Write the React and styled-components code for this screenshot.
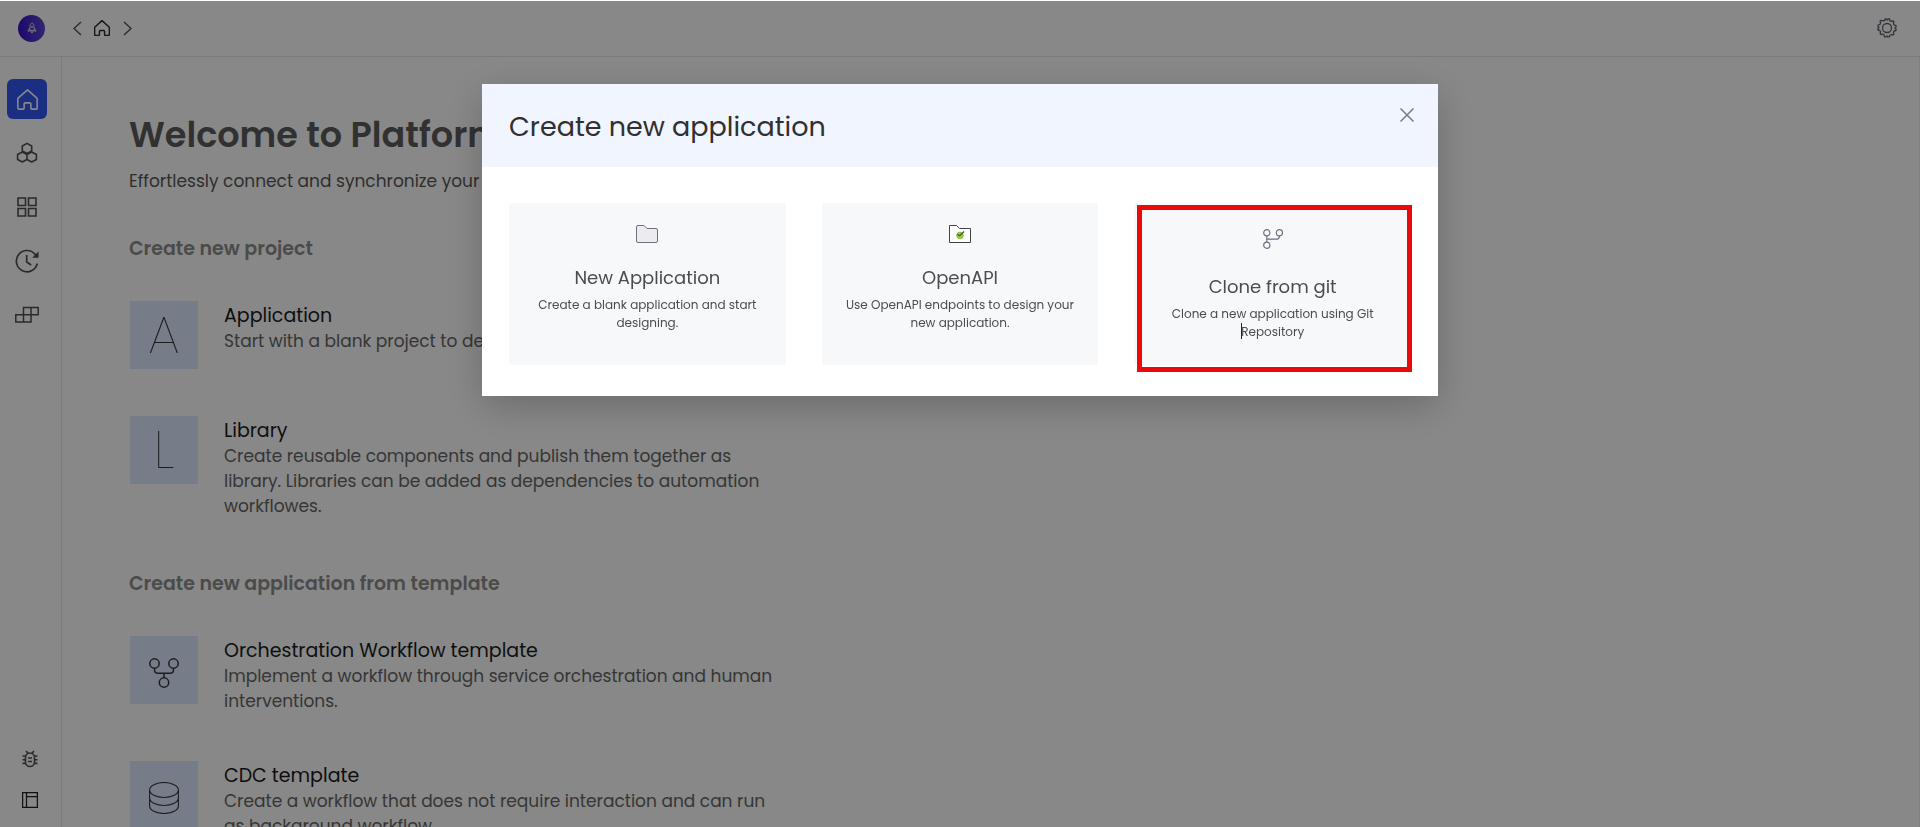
import React from "react";
import styled, { createGlobalStyle } from "styled-components";

const GlobalStyle = createGlobalStyle`
  * { box-sizing: border-box; }
  body { margin: 0; background: #fff; overflow: hidden; font-family: Poppins, Inter, sans-serif; }
  h1, h2, h3, p { margin: 0; }
  button { padding: 0; border: 0; background: none; font: inherit; color: inherit; cursor: pointer; }
  svg { display: block; fill: none; stroke: currentColor; }
`;

const Shell = styled.div`
  height: 100vh;
  display: flex;
  flex-direction: column;
  overflow: hidden;
`;
const TopBar = styled.header`
  flex: none;
  height: 57px;
  display: flex;
  align-items: center;
  padding: 0 23px 0 18px;
  border-bottom: 1px solid #e6e6e6;
`;
const Logo = styled.a`
  width: 27px;
  height: 27px;
  display: grid;
  place-items: center;
  border-radius: 50%;
  background: linear-gradient(90deg, #3a10c8, #5c4ad0);
  color: #fff;
`;
const History = styled.nav`
  display: flex;
  align-items: center;
  gap: 11px;
  margin-left: 26px;
  color: #5c5c5c;
`;
const HistoryButton = styled.button`
  display: grid;
  place-items: center;
  width: ${(p) => (p.$wide ? 16 : 12)}px;
  height: 24px;
  color: ${(p) => (p.$wide ? "#2a2a2a" : "#555")};
`;
const Settings = styled.button`
  margin-left: auto;
  color: #62626e;
`;
const Body = styled.div`
  flex: 1;
  min-height: 0;
  display: flex;
`;
const SideBar = styled.nav`
  flex: none;
  width: 62px;
  display: flex;
  flex-direction: column;
  gap: 14px;
  padding: 22px 8px 13px 7px;
  border-right: 1px solid #e6e6e6;
`;
const SideButton = styled.button`
  width: 40px;
  height: 40px;
  display: grid;
  place-items: center;
  border-radius: 6px;
  background: ${(p) => (p.$active ? "#3458f4" : "transparent")};
  color: ${(p) => (p.$active ? "#fff" : "#505050")};
`;
const SideFooter = styled.div`
  margin-top: auto;
  display: flex;
  flex-direction: column;
  align-items: center;
  gap: 13px;
`;
const FooterButton = styled.button`
  width: 28px;
  height: 28px;
  display: grid;
  place-items: center;
  color: ${(p) => (p.$dark ? "#202020" : "#505050")};
`;
const Main = styled.main`
  flex: 1;
  min-width: 0;
  overflow: hidden;
  padding: 54px 67px 0;
  border-right: 1px solid #eee;
`;
const Welcome = styled.h1`
  font-size: 35px;
  line-height: 48px;
  font-weight: 600;
  color: #5c5c5c;
`;
const Lead = styled.p`
  margin-top: 10px;
  font-size: 17px;
  line-height: 24px;
  color: #585858;
`;
const Section = styled.section`
  margin-top: ${(p) => (p.$first ? 42 : 51)}px;
`;
const SectionTitle = styled.h2`
  font-size: 19px;
  line-height: 28px;
  font-weight: 600;
  color: #8d8d8d;
`;
const List = styled.div`
  display: flex;
  flex-direction: column;
  gap: 47px;
  margin-top: 38px;
  padding-left: 1px;
`;
const Starter = styled.button`
  display: flex;
  align-items: flex-start;
  gap: 26px;
  width: 100%;
  max-width: 660px;
  text-align: left;
`;
const Tile = styled.span`
  flex: none;
  width: 68px;
  height: 68px;
  display: grid;
  place-items: center;
  padding-top: ${(p) => (p.$drawing ? 5 : 0)}px;
  background: #dde9ff;
  color: #383838;
  font-size: 52px;
  line-height: 68px;
  font-weight: 200;
`;
const StarterText = styled.span`
  display: block;
  padding-top: 2px;
`;
const StarterTitle = styled.span`
  display: block;
  font-size: 19px;
  line-height: 26px;
  color: #1c1c1c;
`;
const StarterNote = styled.span`
  display: block;
  font-size: 17px;
  line-height: 25px;
  color: #666;
`;

const Backdrop = styled.div`
  position: fixed;
  inset: 1px 0 0;
  display: flex;
  align-items: flex-start;
  justify-content: center;
  padding: 83px 24px 24px;
  background: rgba(0, 0, 0, 0.467);
`;
const Dialog = styled.section`
  width: 100%;
  max-width: 956px;
  background: #fff;
  box-shadow: 0 10px 36px rgba(0, 0, 0, 0.22);
`;
const DialogHeader = styled.header`
  display: flex;
  justify-content: space-between;
  align-items: flex-start;
  padding: 20px 20px 20px 27px;
  background: #f0f5ff;
`;
const DialogTitle = styled.h2`
  padding-top: 3px;
  font-size: 27px;
  line-height: 40px;
  font-weight: 400;
  color: #303030;
`;
const Close = styled.button`
  width: 22px;
  height: 22px;
  display: grid;
  place-items: center;
  color: #777b82;
`;
const Cards = styled.div`
  display: grid;
  grid-template-columns: repeat(3, 1fr);
  gap: 36px;
  padding: 36px 27px 31px;
`;
const Card = styled.button`
  position: relative;
  height: 162px;
  display: flex;
  flex-direction: column;
  align-items: center;
  justify-content: flex-start;
  padding: 19px 24px 0;
  border-radius: 2px;
  background: #f7f8fa;
`;
const CardIcon = styled.span`
  height: ${(p) => (p.$tall ? 33 : 24)}px;
  display: grid;
  place-items: center;
  color: #6e6e80;
`;
const CardTitle = styled.span`
  margin-top: 18px;
  font-size: 18px;
  line-height: 28px;
  color: #4c4c4c;
`;
const CardNote = styled.span`
  margin-top: 4px;
  font-size: 12px;
  line-height: 18px;
  color: #4c4c4c;
`;
const Highlight = styled.span`
  position: absolute;
  inset: 2px -1px -7px 3px;
  border: 5px solid #eb0909;
  pointer-events: none;
`;
const CaretWord = styled.span`
  position: relative;
  &::before {
    content: "";
    position: absolute;
    left: 0;
    top: 0;
    width: 1px;
    height: 16px;
    background: #222;
  }
`;

const Rocket = () => (
  <svg width="10" height="12" viewBox="0 0 10 12" strokeWidth="0.8">
    <path d="M5 .8C6.400 2 7 3.200 7 4.600V8.600H3V4.600C3 3.200 3.600 2 5 .8ZM3 6.200 1.300 7.800v1.600L3 8.600M7 6.200l1.700 1.600v1.600L7 8.600M4.200 8.800v1.400l.8 1 .8-1V8.800" />
    <circle cx="5" cy="4.800" r=".6" />
  </svg>
);
const House = ({ size, weight }) => (
  <svg width={size} height={size} viewBox="0 0 20 20" strokeWidth={weight} strokeLinejoin="round">
    <path d="M10 .8.8 9v9.2q0 1 1 1h4q1 0 1-1v-4q0-1 1-1h4.400q1 0 1 1v4q0 1 1 1h4q1 0 1-1V9Z" />
  </svg>
);
const Chevron = ({ right }) => (
  <svg width="9" height="15" viewBox="0 0 9 15" strokeWidth="1.400">
    <path d={right ? "M1 1l7 6.500L1 14" : "M8 1 1 7.500 8 14"} />
  </svg>
);
const Gear = () => (
  <svg width="20" height="20" viewBox="0 0 20 20" strokeWidth="1.300" strokeLinejoin="round">
    <path d="M7.700 2.500 8.200 1h.9l1 .9 1-.9h1.400l.5 1.800 1.200.6 1.700-.6 1 1-.5 1.800.7 1.300 1.900.6v1.500l-1 1 1 1v1.500l-1.900.5-.7 1.300.5 1.700-1 1.100-1.700-.6-1.300.7-.5 1.700h-1.400l-1-.9-1 .9H7.500L7 16.700l-1.200-.7-1.700.6-1-1.100.5-1.700-.7-1.300L1 12v-1.500l1-1-1-1V7l1.900-.6.7-1.300-.5-1.800 1-1 1.700.6Z" />
    <circle cx="10" cy="10" r="4.500" />
  </svg>
);
const Hexagons = () => (
  <svg width="22" height="22" viewBox="0 0 22 22" strokeWidth="1.600" strokeLinejoin="round">
    <path d="m11 1.400 4.700 2.600v5L11 11.500 6.300 9V4ZM6.300 10l4.700 2.500v5L6.300 20l-4.700-2.500v-5ZM15.700 10l4.700 2.500v5L15.700 20 11 17.500v-5Z" />
  </svg>
);
const Grid = () => (
  <svg width="20" height="20" viewBox="0 0 20 20" strokeWidth="1.600">
    <path d="M1 1h7.500v7.500H1zM11.500 1H19v7.500h-7.500zM1 11.500h7.500V19H1zM11.500 11.500H19V19h-7.500z" />
  </svg>
);
const Recent = () => (
  <svg width="24" height="24" viewBox="0 0 24 24" strokeWidth="1.700">
    <path d="M22.300 14.500A10.600 10.600 0 1 1 20 5.200l2 2.300M11.700 6v7l4.500 3" />
    <path d="M22.700 4.500v3.300h-3.400Z" fill="currentColor" />
  </svg>
);
const Blocks = () => (
  <svg width="24" height="18" viewBox="0 0 24 18" strokeWidth="1.500">
    <path d="M8.500 1.500h14.700v7.300H8.500zM.8 8.800h15.200v7.300H.8zM16 1.500v7.300M8.500 8.800v7.300" />
  </svg>
);
const Bug = () => (
  <svg width="16" height="18" viewBox="0 0 16 18" strokeWidth="1.600">
    <rect x="3.500" y="3" width="9" height="13.500" rx="4.500" />
    <path d="m4 1 2 2.300M12 1l-2 2.300M.5 6h3M.5 9.700h3M.5 13.400h3M12.500 6h3M12.500 9.700h3M12.500 13.400h3M6 8h4M6 11.500h4" />
  </svg>
);
const Panel = () => (
  <svg width="16" height="16" viewBox="0 0 16 16" strokeWidth="1.300">
    <path d="M.6.6h14.800v14.800H.6zM4.500.6v14.800M4.500 4.700h10.900" />
  </svg>
);
const Workflow = () => (
  <svg width="30" height="30" viewBox="0 0 30 30" strokeWidth="1.500">
    <circle cx="5.500" cy="5.500" r="4.700" />
    <circle cx="24.500" cy="5.500" r="4.700" />
    <circle cx="15" cy="24.500" r="4.700" />
    <path d="M5.500 10.200v1.500q0 3.500 3.500 3.500h12q3.500 0 3.500-3.500v-1.500M15 15.200v4.600" />
  </svg>
);
const Database = () => (
  <svg width="30" height="32" viewBox="0 0 30 32" strokeWidth="1.100">
    <ellipse cx="15" cy="8" rx="14.400" ry="7.500" />
    <path d="M.6 8v16c0 4.200 6.400 7.500 14.400 7.500S29.400 28.200 29.400 24V8M.6 16c0 4.200 6.400 7.500 14.400 7.500S29.400 20.200 29.400 16" />
  </svg>
);
const Folder = () => (
  <svg width="22" height="18" viewBox="0 0 22 18">
    <path d="M2 .5h6l3 3h9q1.500 0 1.500 1.500v11q0 1.500-1.500 1.500H2Q.5 17.500.5 16V2Q.5.5 2 .5Z" fill="#ececf0" />
  </svg>
);
const ApiFolder = () => (
  <svg width="22" height="18" viewBox="0 0 22 18">
    <path d="M.5.5h7l3 3h11v14H.5Z" fill="#fff" stroke="#444" />
    <circle cx="11" cy="10.500" r="3.300" fill="#9bd62a" stroke="#8bb84a" strokeWidth="1" />
    <path d="m10.500 11 4.500-4.500M8.500 9l2 2" stroke="#4c5444" strokeWidth="1.200" />
  </svg>
);
const Branch = () => (
  <svg width="20" height="20" viewBox="0 0 20 20" strokeWidth="1.200">
    <circle cx="3.800" cy="3.800" r="3.100" />
    <circle cx="16.400" cy="3.800" r="3.100" />
    <circle cx="3.800" cy="16.200" r="3.100" />
    <path d="M3.800 6.900v6.200M3.800 10.200H13q3.400 0 3.400-3.300" />
  </svg>
);
const Cross = () => (
  <svg width="14" height="14" viewBox="0 0 14 14" strokeWidth="1.500">
    <path d="m.5.5 13 13M13.500.5l-13 13" />
  </svg>
);

const StarterRow = ({ letter, drawing, title, children }) => (
  <Starter type="button">
    <Tile $drawing={Boolean(drawing)}>{letter || drawing}</Tile>
    <StarterText>
      <StarterTitle>{title}</StarterTitle>
      <StarterNote>{children}</StarterNote>
    </StarterText>
  </Starter>
);

export default function App() {
  return (
    <>
      <GlobalStyle />
      <Shell>
        <TopBar>
          <Logo href="#" aria-label="Platform"><Rocket /></Logo>
          <History aria-label="History">
            <HistoryButton aria-label="Back"><Chevron /></HistoryButton>
            <HistoryButton $wide aria-label="Home"><House size={16} weight={1.8} /></HistoryButton>
            <HistoryButton aria-label="Forward"><Chevron right /></HistoryButton>
          </History>
          <Settings aria-label="Settings"><Gear /></Settings>
        </TopBar>
        <Body>
          <SideBar aria-label="Main">
            <SideButton $active aria-label="Home"><House size={21} weight={1.5} /></SideButton>
            <SideButton aria-label="Modules"><Hexagons /></SideButton>
            <SideButton aria-label="Applications"><Grid /></SideButton>
            <SideButton aria-label="Recent"><Recent /></SideButton>
            <SideButton aria-label="Components"><Blocks /></SideButton>
            <SideFooter>
              <FooterButton aria-label="Debug"><Bug /></FooterButton>
              <FooterButton $dark aria-label="Panels"><Panel /></FooterButton>
            </SideFooter>
          </SideBar>
          <Main>
            <Welcome>Welcome to Platform</Welcome>
            <Lead>Effortlessly connect and synchronize your</Lead>
            <Section $first>
              <SectionTitle>Create new project</SectionTitle>
              <List>
                <StarterRow letter="A" title="Application">Start with a blank project to design</StarterRow>
                <StarterRow letter="L" title="Library">
                  Create reusable components and publish them together as library. Libraries can be added as dependencies to automation workflowes.
                </StarterRow>
              </List>
            </Section>
            <Section>
              <SectionTitle>Create new application from template</SectionTitle>
              <List>
                <StarterRow drawing={<Workflow />} title="Orchestration Workflow template">
                  Implement a workflow through service orchestration and human interventions.
                </StarterRow>
                <StarterRow drawing={<Database />} title="CDC template">
                  Create a workflow that does not require interaction and can run as background workflow.
                </StarterRow>
              </List>
            </Section>
          </Main>
        </Body>
      </Shell>
      <Backdrop>
        <Dialog role="dialog" aria-modal="true" aria-labelledby="dialog-title">
          <DialogHeader>
            <DialogTitle id="dialog-title">Create new application</DialogTitle>
            <Close aria-label="Close"><Cross /></Close>
          </DialogHeader>
          <Cards>
            <Card>
              <CardIcon><Folder /></CardIcon>
              <CardTitle>New Application</CardTitle>
              <CardNote>Create a blank application and start designing.</CardNote>
            </Card>
            <Card>
              <CardIcon><ApiFolder /></CardIcon>
              <CardTitle>OpenAPI</CardTitle>
              <CardNote>Use OpenAPI endpoints to design your new application.</CardNote>
            </Card>
            <Card>
              <CardIcon $tall><Branch /></CardIcon>
              <CardTitle>Clone from git</CardTitle>
              <CardNote>Clone a new application using Git <CaretWord>Repository</CaretWord></CardNote>
              <Highlight />
            </Card>
          </Cards>
        </Dialog>
      </Backdrop>
    </>
  );
}
